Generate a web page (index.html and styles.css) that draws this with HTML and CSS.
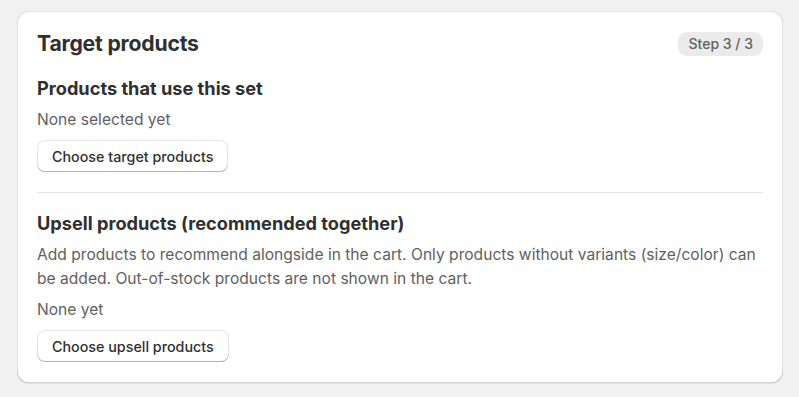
FILE: index.html
```html
<!DOCTYPE html>
<html lang="en">
<head>
<meta charset="utf-8">
<title>Target products</title>
<link rel="stylesheet" href="styles.css">
</head>
<body>
<div class="page">
  <section class="card">
    <div class="card-header">
      <h2 class="card-title">Target products</h2>
      <span class="badge">Step 3 / 3</span>
    </div>
    <div class="section">
      <h3 class="section-title">Products that use this set</h3>
      <p class="muted shift">None selected yet</p>
      <div class="actions actions-first"><button class="btn" type="button">Choose target products</button></div>
    </div>
    <hr class="divider">
    <div class="section">
      <h3 class="section-title">Upsell products (recommended together)</h3>
      <p class="muted shift">Add products to recommend alongside in the cart. Only products without variants (size/color) can be added. Out-of-stock products are not shown in the cart.</p>
      <p class="muted">None yet</p>
      <div class="actions"><button class="btn" type="button">Choose upsell products</button></div>
    </div>
  </section>
</div>
</body>
</html>
```

FILE: styles.css
```css
html, body {
  margin: 0;
  padding: 0;
  background: #f1f1f1;
}
body {
  font-family: Inter, "Noto Sans", sans-serif;
  color: #303030;
}
.page {
  padding: 11px 16px 15px 17px;
}
.card {
  background: #ffffff;
  border-radius: 12px;
  box-shadow: 0 1px 0 0 rgba(26,26,26,0.07), 0 1px 0 0 rgba(204,204,204,0.5) inset, 0 -1px 0 0 rgba(0,0,0,0.17) inset, -1px 0 0 0 rgba(0,0,0,0.13) inset, 1px 0 0 0 rgba(0,0,0,0.13) inset;
  padding: 20px 20px 21px 20px;
  display: flex;
  flex-direction: column;
}
.card-header {
  display: flex;
  align-items: center;
  justify-content: space-between;
  height: 24px;
  margin-top: 1px;
}
.card-title {
  margin: 0;
  margin-top: -2px;
  font-size: 21.2px;
  font-weight: 650;
  line-height: 24px;
  letter-spacing: -0.2px;
}
.badge {
  background: #ebebeb;
  color: #616161;
  font-size: 14px;
  font-weight: 500;
  line-height: 24px;
  height: 24px;
  padding: 0 10px 0 11px;
  border-radius: 9px;
}
.section {
  display: flex;
  flex-direction: column;
  gap: 7px;
  margin-top: 20px;
}
.divider + .section {
  margin-top: 18px;
}
.section-title {
  margin: 0;
  font-size: 18.2px;
  font-weight: 650;
  line-height: 24px;
}
.muted {
  margin: 0;
  font-size: 15.6px;
  line-height: 24px;
  color: #616161;
}
.shift {
  margin-top: 1px;
}
.actions {
  display: flex;
  margin-top: 1px;
}
.btn {
  font-family: inherit;
  font-size: 14.3px;
  font-weight: 550;
  color: #303030;
  background: #ffffff;
  border: none;
  border-radius: 8px;
  height: 32px;
  padding: 0 15px;
  box-shadow: 0 -1px 0 0 #b5b5b5 inset, 0 0 0 1px rgba(0,0,0,0.1) inset, 0 0.5px 0 1.5px #fff inset;
  cursor: pointer;
}
.divider {
  border: none;
  border-top: 1px solid #e3e3e3;
  margin: 20px 0 0 0;
}
```
